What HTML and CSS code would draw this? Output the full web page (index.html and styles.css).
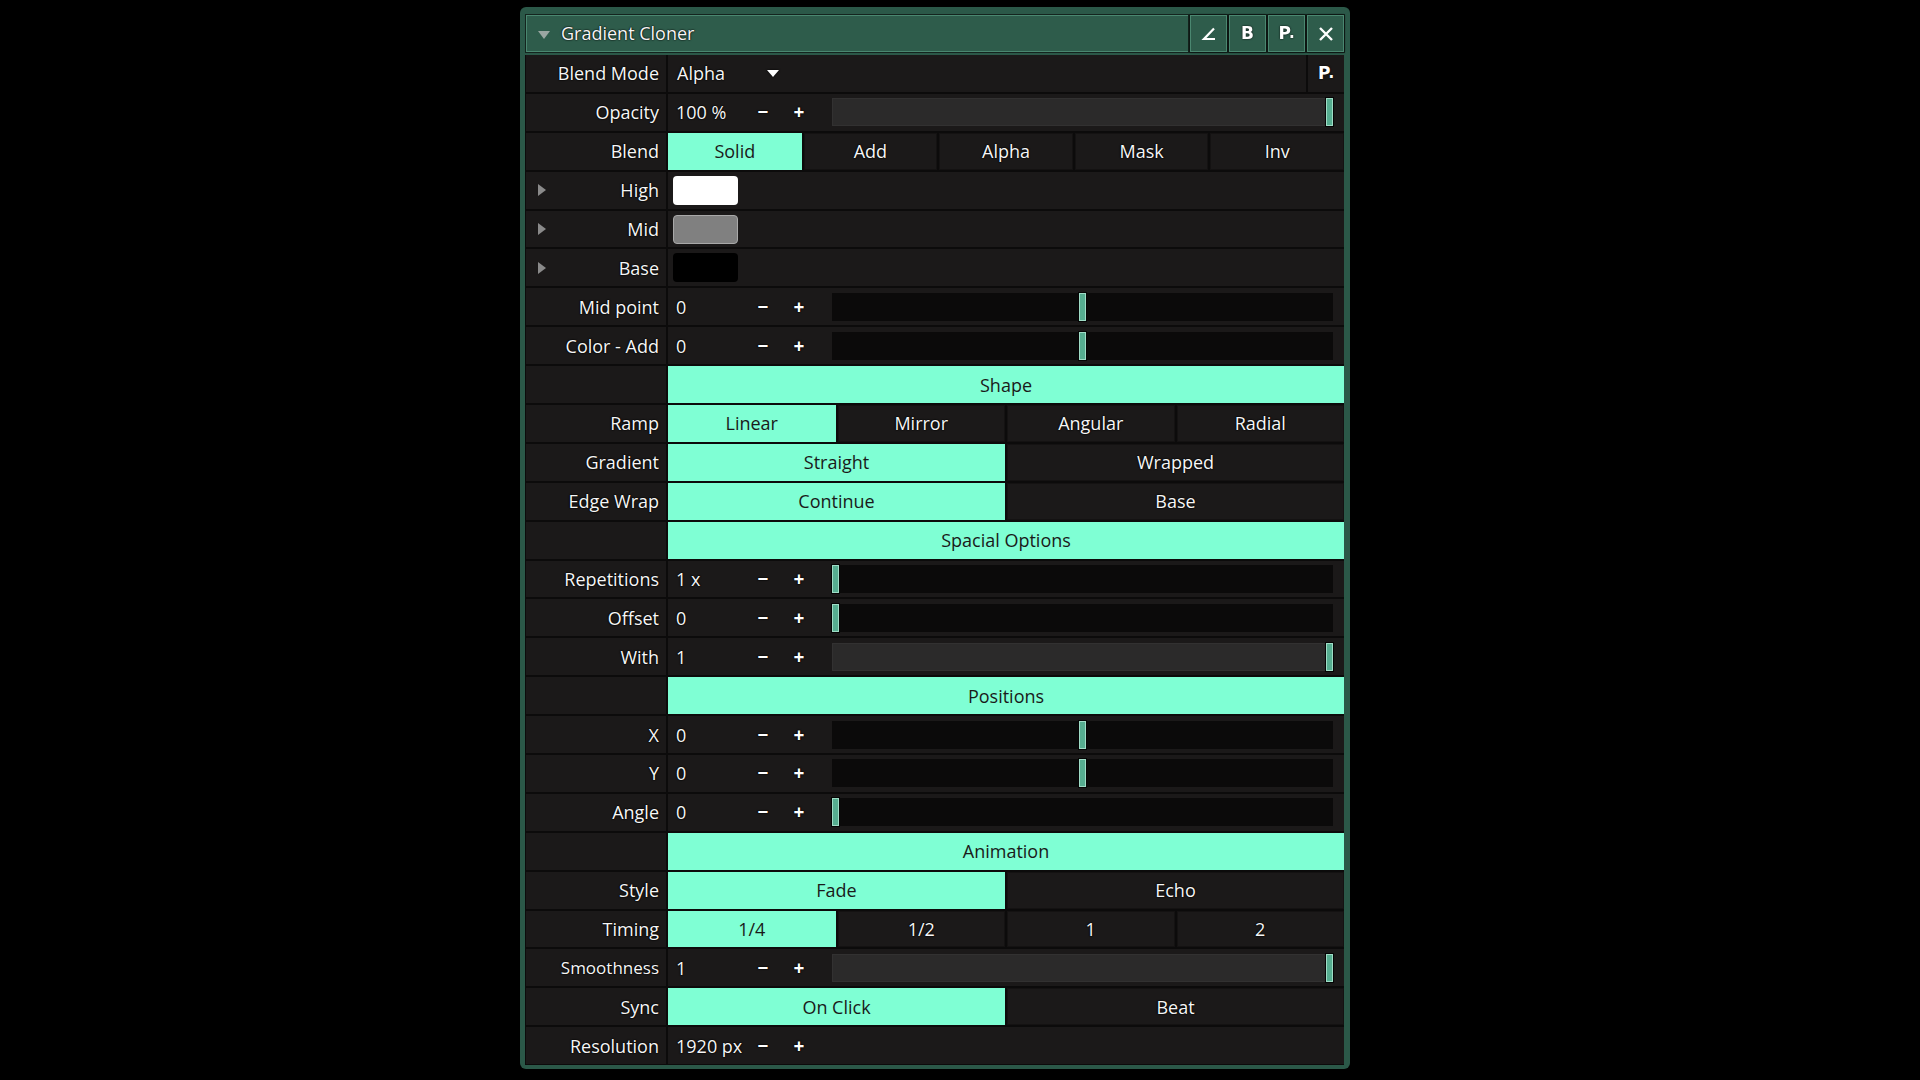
FILE: index.html
```html
<!DOCTYPE html>
<html lang="en">
<head>
<meta charset="utf-8">
<title>Gradient Cloner</title>
<link rel="stylesheet" href="styles.css">
</head>
<body>
<div class="panel">
  <div class="titlebar">
    <span class="title-tri"></span>
    <span class="title-text">Gradient Cloner</span>
    <div class="title-btns">
      <div class="tbtn"><svg width="16" height="14" viewBox="0 0 16 14"><path d="M13 1.5 L3 12 H14" fill="none" stroke="#fff" stroke-width="2.2" stroke-linejoin="miter"/></svg></div>
      <div class="tbtn glyph">B</div>
      <div class="tbtn glyph">P<span class="dot">.</span></div>
      <div class="tbtn"><svg width="16" height="16" viewBox="0 0 16 16"><path d="M2 2 L14 14 M14 2 L2 14" fill="none" stroke="#fff" stroke-width="2.4"/></svg></div>
    </div>
  </div>

  <div class="rows">
    <div class="row">
      <div class="label">Blend Mode</div>
      <div class="value dropdown-cell">
        <div class="dropdown"><span class="val">Alpha</span><span class="dd-arrow"></span></div>
        <div class="pbtn glyph">P<span class="dot">.</span></div>
      </div>
    </div>

    <div class="row">
      <div class="label">Opacity</div>
      <div class="value num">
        <span class="val">100 %</span><span class="pm">−</span><span class="pm">+</span>
        <div class="slider full"><span class="handle" style="left: calc((100% - 7px) * 1)"></span></div>
      </div>
    </div>

    <div class="row">
      <div class="label">Blend</div>
      <div class="value seg seg5">
        <div class="btn on">Solid</div><div class="btn">Add</div><div class="btn">Alpha</div><div class="btn">Mask</div><div class="btn">Inv</div>
      </div>
    </div>

    <div class="row">
      <div class="label"><span class="exp"></span>High</div>
      <div class="value color"><span class="swatch sw-high"></span></div>
    </div>
    <div class="row">
      <div class="label"><span class="exp"></span>Mid</div>
      <div class="value color"><span class="swatch sw-mid"></span></div>
    </div>
    <div class="row">
      <div class="label"><span class="exp"></span>Base</div>
      <div class="value color"><span class="swatch sw-base"></span></div>
    </div>

    <div class="row">
      <div class="label">Mid point</div>
      <div class="value num">
        <span class="val">0</span><span class="pm">−</span><span class="pm">+</span>
        <div class="slider"><span class="handle" style="left: calc((100% - 7px) * 0.5)"></span></div>
      </div>
    </div>
    <div class="row">
      <div class="label">Color - Add</div>
      <div class="value num">
        <span class="val">0</span><span class="pm">−</span><span class="pm">+</span>
        <div class="slider"><span class="handle" style="left: calc((100% - 7px) * 0.5)"></span></div>
      </div>
    </div>

    <div class="row">
      <div class="label"></div>
      <div class="value header">Shape</div>
    </div>
    <div class="row">
      <div class="label">Ramp</div>
      <div class="value seg seg4">
        <div class="btn on">Linear</div><div class="btn">Mirror</div><div class="btn">Angular</div><div class="btn">Radial</div>
      </div>
    </div>
    <div class="row">
      <div class="label">Gradient</div>
      <div class="value seg seg2">
        <div class="btn on">Straight</div><div class="btn">Wrapped</div>
      </div>
    </div>
    <div class="row">
      <div class="label">Edge Wrap</div>
      <div class="value seg seg2">
        <div class="btn on">Continue</div><div class="btn">Base</div>
      </div>
    </div>

    <div class="row">
      <div class="label"></div>
      <div class="value header">Spacial Options</div>
    </div>
    <div class="row">
      <div class="label">Repetitions</div>
      <div class="value num">
        <span class="val">1 x</span><span class="pm">−</span><span class="pm">+</span>
        <div class="slider"><span class="handle" style="left: 0"></span></div>
      </div>
    </div>
    <div class="row">
      <div class="label">Offset</div>
      <div class="value num">
        <span class="val">0</span><span class="pm">−</span><span class="pm">+</span>
        <div class="slider"><span class="handle" style="left: 0"></span></div>
      </div>
    </div>
    <div class="row">
      <div class="label">With</div>
      <div class="value num">
        <span class="val">1</span><span class="pm">−</span><span class="pm">+</span>
        <div class="slider full"><span class="handle" style="left: calc((100% - 7px) * 1)"></span></div>
      </div>
    </div>

    <div class="row">
      <div class="label"></div>
      <div class="value header">Positions</div>
    </div>
    <div class="row">
      <div class="label">X</div>
      <div class="value num">
        <span class="val">0</span><span class="pm">−</span><span class="pm">+</span>
        <div class="slider"><span class="handle" style="left: calc((100% - 7px) * 0.5)"></span></div>
      </div>
    </div>
    <div class="row">
      <div class="label">Y</div>
      <div class="value num">
        <span class="val">0</span><span class="pm">−</span><span class="pm">+</span>
        <div class="slider"><span class="handle" style="left: calc((100% - 7px) * 0.5)"></span></div>
      </div>
    </div>
    <div class="row">
      <div class="label">Angle</div>
      <div class="value num">
        <span class="val">0</span><span class="pm">−</span><span class="pm">+</span>
        <div class="slider"><span class="handle" style="left: 0"></span></div>
      </div>
    </div>

    <div class="row">
      <div class="label"></div>
      <div class="value header">Animation</div>
    </div>
    <div class="row">
      <div class="label">Style</div>
      <div class="value seg seg2">
        <div class="btn on">Fade</div><div class="btn">Echo</div>
      </div>
    </div>
    <div class="row">
      <div class="label">Timing</div>
      <div class="value seg seg4">
        <div class="btn on">1/4</div><div class="btn">1/2</div><div class="btn">1</div><div class="btn">2</div>
      </div>
    </div>
    <div class="row">
      <div class="label small">Smoothness</div>
      <div class="value num">
        <span class="val">1</span><span class="pm">−</span><span class="pm">+</span>
        <div class="slider full"><span class="handle" style="left: calc((100% - 7px) * 1)"></span></div>
      </div>
    </div>
    <div class="row">
      <div class="label">Sync</div>
      <div class="value seg seg2">
        <div class="btn on">On Click</div><div class="btn">Beat</div>
      </div>
    </div>
    <div class="row">
      <div class="label">Resolution</div>
      <div class="value num">
        <span class="val">1920 px</span><span class="pm">−</span><span class="pm">+</span>
      </div>
    </div>
  </div>
</div>
</body>
</html>
```

FILE: styles.css
```css
html, body {
  margin: 0;
  padding: 0;
  background: #000;
}

body {
  font-family: "Open Sans", "Noto Sans", "Liberation Sans", sans-serif;
  font-size: 18px;
  font-weight: 500;
  color: #f6f6f6;
}

.panel {
  box-sizing: border-box;
  width: 830px;
  height: 1062px;
  margin: 7px 0 0 520px;
  background: #2b5848;
  border-radius: 6px;
  padding: 8px 6px 4px 5px;
  display: flex;
  flex-direction: column;
}

.titlebar {
  box-sizing: border-box;
  height: 37px;
  flex: 0 0 37px;
  background: #2e5c4b;
  border: 1px solid #4a8770;
  box-shadow: 0 0 0 1px #14241e;
  display: flex;
  align-items: center;
  margin: 0 0 3px 1px;
}

.title-tri {
  width: 0;
  height: 0;
  border-left: 6px solid transparent;
  border-right: 6px solid transparent;
  border-top: 8px solid #9aa7a2;
  margin: 2px 0 0 11px;
}

.title-text {
  margin-left: 11px;
  text-shadow: 0 0 2px #000, 0 0 1px #000;
  flex: 1;
  line-height: 1;
  padding-bottom: 1px;
}

.title-btns {
  display: flex;
  align-self: stretch;
  gap: 2px;
  background: #15241e;
  padding-left: 2px;
  margin: -1px -1px -1px 0;
}

.tbtn {
  box-sizing: border-box;
  width: 37px;
  background: #2e5c4b;
  border: 1px solid #4a8770;
  display: flex;
  align-items: center;
  justify-content: center;
  filter: drop-shadow(0 0 1px #000);
}

.glyph {
  font-family: "DejaVu Sans", sans-serif;
  font-weight: bold;
  font-size: 17px;
  color: #fff;
  text-shadow: 0 0 2px #000;
  line-height: 1;
}

.glyph .dot {
  font-size: 15px;
  margin-left: -2px;
}

.rows {
  flex: 1;
  display: grid;
  grid-auto-rows: 36.9px;
  row-gap: 2px;
  background: #0c0b0b;
  padding-left: 1px;
  overflow: hidden;
}

.row {
  display: grid;
  grid-template-columns: 140px 1fr;
  column-gap: 2px;
}

.label {
  background: #1b1919;
  display: flex;
  align-items: center;
  justify-content: flex-end;
  padding-right: 7px;
  text-shadow: 0 0 2px #000, 0 0 1px #000, 0 0 1px #000;
  white-space: nowrap;
  position: relative;
}

.label.small {
  font-size: 17px;
}

.exp {
  position: absolute;
  left: 12px;
  top: 50%;
  margin-top: -6px;
  width: 0;
  height: 0;
  border-top: 6px solid transparent;
  border-bottom: 6px solid transparent;
  border-left: 8px solid #8a8a8a;
}

.value {
  background: #1b1919;
  min-width: 0;
  text-shadow: 0 0 2px #000, 0 0 1px #000, 0 0 1px #000;
}

.val {
  white-space: nowrap;
}

/* dropdown row */
.dropdown-cell {
  display: grid;
  grid-template-columns: 1fr 36px;
  column-gap: 2px;
  background: #0c0b0b;
}

.dropdown {
  background: #1b1919;
  display: flex;
  align-items: center;
  padding-left: 9px;
}

.dropdown .val {
  width: 90px;
}

.dd-arrow {
  width: 0;
  height: 0;
  border-left: 6px solid transparent;
  border-right: 6px solid transparent;
  border-top: 7px solid #fff;
  filter: drop-shadow(0 0 1px #000);
}

.pbtn {
  background: #1b1919;
  display: flex;
  align-items: center;
  justify-content: center;
}

/* numeric row */
.num {
  display: flex;
  align-items: center;
}

.num .val {
  box-sizing: border-box;
  width: 77px;
  padding-left: 8px;
}

.pm {
  width: 36px;
  text-align: center;
  font-weight: bold;
  font-size: 19px;
  color: #fff;
}

.slider {
  position: relative;
  flex: 1;
  height: 28px;
  margin: 0 11px 0 15px;
  background: #0b0a0a;
}

.slider.full {
  background: #2b2a2a;
  box-shadow: inset 0 0 0 1px #323131;
}

.handle {
  position: absolute;
  top: 0;
  bottom: 0;
  width: 7px;
  box-sizing: border-box;
  background: #56ad90;
  border: 1px solid #9fdcc6;
  box-shadow: 0 0 0 1px #050505;
}

/* segmented */
.seg {
  display: grid;
  column-gap: 2px;
  background: #0c0b0b;
}

.seg2 { grid-template-columns: repeat(2, 1fr); }
.seg4 { grid-template-columns: repeat(4, 1fr); }
.seg5 { grid-template-columns: repeat(5, 1fr); }

.btn {
  background: #1b1919;
  display: flex;
  align-items: center;
  justify-content: center;
  white-space: nowrap;
  box-shadow: inset 0 0 0 1px #141212;
}

.btn.on {
  background: #7fffd4;
  color: #1a1a1a;
  text-shadow: none;
  box-shadow: none;
}

.header {
  background: #7fffd4;
  color: #1a1a1a;
  text-shadow: none;
  display: flex;
  align-items: center;
  justify-content: center;
}

/* color swatches */
.color {
  display: flex;
  align-items: center;
  padding-left: 5px;
}

.swatch {
  box-sizing: border-box;
  width: 65px;
  height: 29px;
  border-radius: 4px;
}

.sw-high { background: #ffffff; }
.sw-mid { background: #808080; border: 1px solid #a9a9a9; }
.sw-base { background: #000000; }
```
